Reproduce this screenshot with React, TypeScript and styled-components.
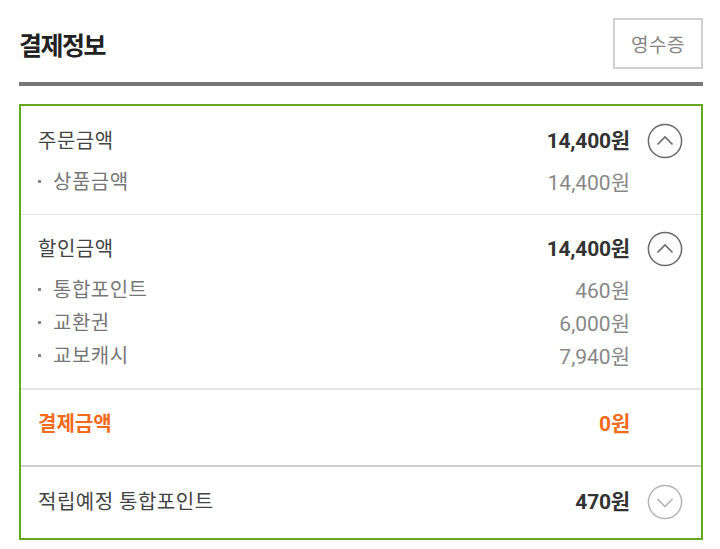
import styled, { createGlobalStyle } from "styled-components";

type Item = { label: string; value: string };

type Section = {
  title: string;
  value: string;
  items?: Item[];
  icon?: "up" | "down";
  accent?: boolean;
  pt: number;
  pb: number;
  divider?: string;
};

const sections: Section[] = [
  {
    title: "주문금액",
    value: "14,400원",
    icon: "up",
    items: [{ label: "상품금액", value: "14,400원" }],
    pt: 18,
    pb: 17,
    divider: "1px solid #e3e3e3",
  },
  {
    title: "할인금액",
    value: "14,400원",
    icon: "up",
    items: [
      { label: "통합포인트", value: "460원" },
      { label: "교환권", value: "6,000원" },
      { label: "교보캐시", value: "7,940원" },
    ],
    pt: 17,
    pb: 17,
    divider: "2px solid #e6e6e6",
  },
  {
    title: "결제금액",
    value: "0원",
    accent: true,
    pt: 17,
    pb: 24,
    divider: "2px solid #cfcfcf",
  },
  {
    title: "적립예정 통합포인트",
    value: "470원",
    icon: "down",
    pt: 18,
    pb: 19,
  },
];

// Circle toggle drawn as svg
function Toggle({ dir }: { dir: "up" | "down" }) {
  const color = dir === "up" ? "#6b6b6b" : "#b5b5b5";
  return (
    <svg width="36" height="36" viewBox="0 0 36 36">
      <circle cx="18" cy="18" r="16.6" fill="none" stroke={color} strokeWidth="1.5" />
      {dir === "up" ? (
        <polyline points="10.5,21.5 18,14 25.5,21.5" fill="none" stroke={color} strokeWidth="1.6" />
      ) : (
        <polyline points="10.5,15 18,22.5 25.5,15" fill="none" stroke={color} strokeWidth="1.6" />
      )}
    </svg>
  );
}

export default function App() {
  return (
    <Page>
      <GlobalStyle />
      <Header>
        <Title>결제정보</Title>
        <ReceiptButton>영수증</ReceiptButton>
      </Header>
      <Bar />
      <Box>
        {sections.map((s) => (
          <Block key={s.title} $pt={s.pt} $pb={s.pb} $divider={s.divider}>
            <HeadRow>
              <HeadLabel $accent={s.accent}>{s.title}</HeadLabel>
              <HeadValue $accent={s.accent}>{s.value}</HeadValue>
              <IconSlot>{s.icon && <Toggle dir={s.icon} />}</IconSlot>
            </HeadRow>
            {s.items && (
              <SubList>
                {s.items.map((it) => (
                  <SubRow key={it.label}>
                    <Bullet />
                    <SubLabel>{it.label}</SubLabel>
                    <SubValue>{it.value}</SubValue>
                  </SubRow>
                ))}
              </SubList>
            )}
          </Block>
        ))}
      </Box>
    </Page>
  );
}

const GlobalStyle = createGlobalStyle`
  body {
    margin: 0;
    background: #fff;
    font-family: Roboto, "Noto Sans CJK KR", sans-serif;
  }
`;

const Page = styled.div`
  width: 720px;
  box-sizing: border-box;
  padding: 18px 17px 0 19px;
`;

const Header = styled.div`
  display: flex;
  align-items: center;
  justify-content: space-between;
  height: 51px;
  margin-bottom: 13px;
`;

const Title = styled.h2`
  margin: 0;
  font-family: "Noto Sans CJK KR", sans-serif;
  font-size: 25px;
  font-weight: 700;
  letter-spacing: -1.5px;
  color: #222;
`;

const ReceiptButton = styled.button`
  width: 90px;
  height: 51px;
  box-sizing: border-box;
  border: 2px solid #d0d0d0;
  background: #fff;
  color: #858585;
  font-family: "Noto Sans CJK KR", sans-serif;
  font-size: 19px;
  letter-spacing: 0.5px;
  padding: 0;
`;

const Bar = styled.div`
  height: 4px;
  background: #777;
`;

const Box = styled.div`
  margin-top: 18px;
  border: 2px solid #63a81f;
`;

const Block = styled.div<{ $pt: number; $pb: number; $divider?: string }>`
  padding: ${(p) => p.$pt}px 18px ${(p) => p.$pb}px 17px;
  border-bottom: ${(p) => p.$divider || "none"};
`;

const HeadRow = styled.div`
  display: flex;
  align-items: center;
  height: 34px;
`;

const HeadLabel = styled.span<{ $accent?: boolean }>`
  flex: 1;
  font-size: 20px;
  margin-top: -4px;
  font-weight: ${(p) => (p.$accent ? 700 : 400)};
  color: ${(p) => (p.$accent ? "#f26b1d" : "#444")};
  letter-spacing: ${(p) => (p.$accent ? "0" : "0.5px")};
`;

const HeadValue = styled.span<{ $accent?: boolean }>`
  font-size: 21px;
  margin-top: -4px;
  font-weight: 700;
  color: ${(p) => (p.$accent ? "#f26b1d" : "#333")};
  letter-spacing: -0.2px;
`;

const IconSlot = styled.span`
  width: 36px;
  height: 36px;
  margin-left: 17px;
  display: flex;
`;

const SubList = styled.div`
  margin-top: 6px;
  padding-right: 53px;
`;

const SubRow = styled.div`
  display: flex;
  align-items: center;
  height: 33px;
`;

const Bullet = styled.span`
  width: 3px;
  height: 3px;
  background: #888;
  margin: 2px 12px 0 0;
`;

const SubLabel = styled.span`
  flex: 1;
  font-size: 20px;
  letter-spacing: 0.5px;
  color: #777;
`;

const SubValue = styled.span`
  font-size: 21px;
  color: #888;
`;
